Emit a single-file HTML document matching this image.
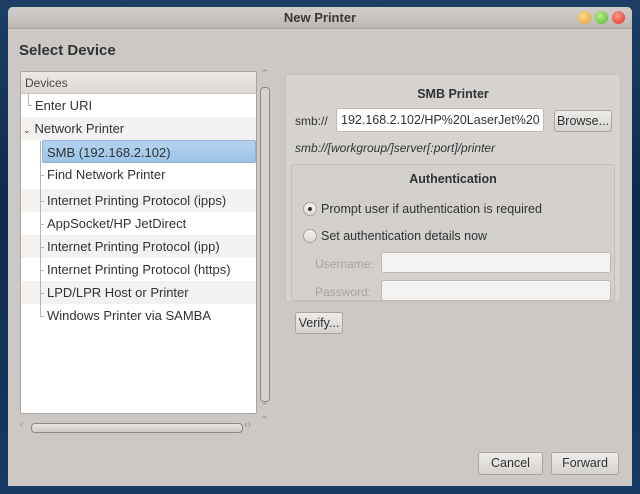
<!DOCTYPE html>
<html><head><meta charset="utf-8"><style>
*{box-sizing:border-box}
body{margin:0;width:640px;height:494px;overflow:hidden;background:linear-gradient(180deg,#1d3f66 0%,#0e2a4c 40%,#163a62 100%);font-family:"Liberation Sans","DejaVu Sans",sans-serif;font-size:12px;color:#2e3436;position:relative}
.win{position:absolute;left:8px;top:7px;width:624px;height:479px;background:#cdc8c4;border-radius:5px 5px 0 0;overflow:hidden}
.tb{height:22px;background:linear-gradient(#d2cecb,#bdb8b4);text-align:center;font-weight:bold;font-size:13px;line-height:22px;color:#3a3a3a;border-bottom:1px solid #aca7a3}
.dot{position:absolute;top:4px;width:13px;height:13px;border-radius:50%}
.abs{position:absolute}
.h{left:11px;top:35px;font-size:15px;font-weight:bold;color:#2e3436}
.list{left:12px;top:64px;width:237px;height:343px;background:#fff;border:1px solid #aaa5a1;border-radius:2px}
.hdr{height:22px;background:linear-gradient(#ebe8e5,#dcd8d4);border-bottom:1px solid #c9c5c1;padding-left:4px;line-height:22px;color:#4a4a4a}
.row{position:absolute;left:0;width:235px;height:23px;line-height:23px;font-size:13px}
.alt{background:#f3f2f1}
.sel{background:linear-gradient(#b5d3ef,#9cc3e8);border:1px solid #8fb4d8;border-radius:2px}
.ln{position:absolute;background:#b5b5b5;z-index:2}
.vs{left:252px;top:80px;width:10px;height:315px;border:1px solid #8e8985;border-radius:4px;background:#d6d2ce}
.hs{left:23px;top:416px;width:212px;height:10px;border:1px solid #8e8985;border-radius:4px;background:linear-gradient(#e6e3e0,#cfcbc7)}
.panel{left:277px;top:67px;width:336px;height:228px;background:#d6d2ce;border:1px solid #c6c1bd;border-radius:3px}
.auth{left:283px;top:157px;width:324px;height:137px;background:#d3cfcb;border:1px solid #c3beba;border-radius:3px}
.btn{position:absolute;height:22px;border:1px solid #a9a4a0;border-radius:3px;background:linear-gradient(#eeecea,#d6d2ce);text-align:center;line-height:20px;font-size:12.5px;color:#2e3436}
.entry{position:absolute;background:#f4f3f2;border:1px solid #bdb8b4;border-radius:3px}
.radio{position:absolute;width:14px;height:14px;border-radius:50%;border:1px solid #a9a4a0;background:linear-gradient(#f4f3f2,#dcd8d4)}
</style></head><body>
<div class="win">
<div class="tb">New Printer</div>
<div class="dot" style="left:570px;background:radial-gradient(circle at 40% 35%,#ffd98a,#e8a030)"></div>
<div class="dot" style="left:587px;background:radial-gradient(circle at 40% 35%,#b8f08a,#55b030)"></div>
<div class="dot" style="left:604px;background:radial-gradient(circle at 40% 35%,#ff9a8a,#d83020)"></div>
<div class="abs h">Select Device</div>
<div class="abs list">
<div class="hdr">Devices</div>
<div class="ln" style="left:7px;top:22px;width:1px;height:12px"></div>
<div class="ln" style="left:7px;top:33px;width:4px;height:1px"></div>
<div class="ln" style="left:19px;top:69px;width:1px;height:175px"></div>
<div class="ln" style="left:19px;top:103px;width:4px;height:1px"></div>
<div class="ln" style="left:19px;top:129px;width:4px;height:1px"></div>
<div class="ln" style="left:19px;top:152px;width:4px;height:1px"></div>
<div class="ln" style="left:19px;top:175px;width:4px;height:1px"></div>
<div class="ln" style="left:19px;top:198px;width:4px;height:1px"></div>
<div class="ln" style="left:19px;top:221px;width:4px;height:1px"></div>
<div class="ln" style="left:19px;top:244px;width:4px;height:1px"></div>
<div class="row" style="top:22px;padding-left:14px">Enter URI</div>
<div class="row alt" style="top:45px;padding-left:14px"><span style="font-size:9px;margin-left:-12px;margin-right:4px">&#8964;</span>Network Printer</div>
<div class="row sel" style="top:68px;left:21px;width:214px;padding-left:4px">SMB (192.168.2.102)</div>
<div class="row" style="top:91px;padding-left:26px">Find Network Printer</div>
<div class="row alt" style="top:117px;padding-left:26px">Internet Printing Protocol (ipps)</div>
<div class="row" style="top:140px;padding-left:26px">AppSocket/HP JetDirect</div>
<div class="row alt" style="top:163px;padding-left:26px">Internet Printing Protocol (ipp)</div>
<div class="row" style="top:186px;padding-left:26px">Internet Printing Protocol (https)</div>
<div class="row alt" style="top:209px;padding-left:26px">LPD/LPR Host or Printer</div>
<div class="row" style="top:232px;padding-left:26px">Windows Printer via SAMBA</div>
</div>
<div class="abs vs"></div>
<div class="abs" style="left:253px;top:61px;font-size:9px;color:#888">&#8963;</div>
<div class="abs" style="left:253px;top:395px;font-size:9px;color:#888;line-height:9px">&#8963;<br>&#8964;</div>
<div class="abs hs"></div>
<div class="abs" style="left:12px;top:412px;color:#999;font-size:11px">&lsaquo;</div>
<div class="abs" style="left:236px;top:412px;color:#999;font-size:11px">&lsaquo;&rsaquo;</div>
<div class="abs panel"></div>
<div class="abs" style="left:277px;top:80px;width:336px;text-align:center;font-weight:bold;font-size:12.5px">SMB Printer</div>
<div class="abs" style="left:287px;top:107px;font-size:12px">smb://</div>
<div class="entry" style="left:328px;top:101px;width:208px;height:24px;padding-left:4px;line-height:22px;font-size:12.5px;background:#fff">192.168.2.102/HP%20LaserJet%20</div>
<div class="btn" style="left:546px;top:103px;width:58px">Browse...</div>
<div class="abs" style="left:287px;top:134px;font-style:italic;font-size:12px">smb://[workgroup/]server[:port]/printer</div>
<div class="abs auth"></div>
<div class="abs" style="left:283px;top:165px;width:324px;text-align:center;font-weight:bold;font-size:12.5px">Authentication</div>
<div class="radio" style="left:295px;top:195px"><div style="position:absolute;left:4px;top:4px;width:4px;height:4px;border-radius:50%;background:#333"></div></div>
<div class="abs" style="left:313px;top:195px;font-size:12.5px">Prompt user if authentication is required</div>
<div class="radio" style="left:295px;top:222px"></div>
<div class="abs" style="left:313px;top:222px;font-size:12.5px">Set authentication details now</div>
<div class="abs" style="left:307px;top:250px;color:#a8a4a0;font-size:12px">Username:</div>
<div class="entry" style="left:373px;top:245px;width:230px;height:21px"></div>
<div class="abs" style="left:307px;top:278px;color:#a8a4a0;font-size:12px">Password:</div>
<div class="entry" style="left:373px;top:273px;width:230px;height:21px"></div>
<div class="btn" style="left:287px;top:305px;width:48px">Verify...</div>
<div class="btn" style="left:470px;top:445px;width:65px;height:23px;line-height:21px">Cancel</div>
<div class="btn" style="left:543px;top:445px;width:68px;height:23px;line-height:21px">Forward</div>
</div>
</body></html>
